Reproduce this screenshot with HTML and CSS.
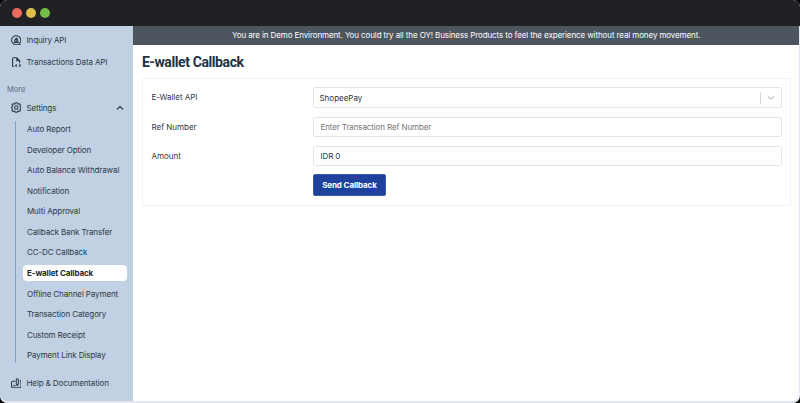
FILE: index.html
```html
<!DOCTYPE html>
<html lang="en">
<head>
<meta charset="utf-8">
<title>E-wallet Callback</title>
<link rel="stylesheet" href="styles.css">
</head>
<body>
<div class="window">
  <header class="titlebar"><i class="dot red"></i><i class="dot yellow"></i><i class="dot green"></i></header>
  <div class="layout">
    <nav class="sidebar">
      <a class="item inquiry"><svg class="icon" viewBox="0 0 20 20"><path d="M15.500 16.8A8.700 8.700 0 1 1 18.700 10c0 2.700-1.200 5-3.200 6.800l3 1.700M5.500 14h9M7 13.500v-3.500M10 13.500V6M13 13.500V9M7 10l3-4 3 3"/></svg><span>Inquiry API</span></a>
      <a class="item transactions"><svg class="icon" viewBox="0 0 20 20"><path d="M6 18.500H4.500A1.500 1.500 0 0 1 3 17V3a1.500 1.500 0 0 1 1.500-1.500H11l5.500 5.500v5M11 2v5h5.500M11 14l-2.500 2.200 2.500 2.300M15.500 14l2.500 2.200-2.500 2.300"/></svg><span>Transactions Data API</span></a>
      <div class="heading">More</div>
      <a class="item settings"><svg class="icon" viewBox="0 0 20 20"><path d="M8.300 1.500h3.400l.6 2 1.600.7 1.900-1 2.300 2.400-1 1.900.7 1.500 1 .3v2.400l-1.100.8-.6 1.300 1 2-2.300 2.300-1.900-1-1.600.7-.6 1.700H8.300l-.6-1.700-1.600-.7-1.900 1-2.300-2.300 1-2-.7-1.300-1-.8V9.300l1-.3.7-1.500-1-1.900 2.300-2.400 1.900 1 1.600-.7z"/><circle cx="10" cy="10.500" r="3.200"/></svg><span>Settings</span><svg class="caret" viewBox="0 0 8 6"><path d="M1 4.500L4 1.500l3 3"/></svg></a>
      <div class="submenu">
        <a>Auto Report</a>
        <a>Developer Option</a>
        <a>Auto Balance Withdrawal</a>
        <a>Notification</a>
        <a>Multi Approval</a>
        <a>Callback Bank Transfer</a>
        <a>CC-DC Callback</a>
        <a class="active">E-wallet Callback</a>
        <a>Offline Channel Payment</a>
        <a>Transaction Category</a>
        <a>Custom Receipt</a>
        <a>Payment Link Display</a>
      </div>
      <a class="item help"><svg class="icon" viewBox="0 0 20 20"><path d="M8 6H3.500A2.500 2.500 0 0 0 1 8.500V16a2.500 2.500 0 0 0 2.500 2.500h13A2.500 2.500 0 0 0 19 16V5h-2M4.500 14.500h4M10 3.500a2 2 0 0 1 4 0V11l-2 3.500-2-3.500z"/></svg><span>Help &amp; Documentation</span></a>
    </nav>
    <main class="main">
      <div class="banner">You are in Demo Environment. You could try all the OY! Business Products to feel the experience without real money movement.</div>
      <h1>E-wallet Callback</h1>
      <form class="card">
        <label>E-Wallet API</label>
        <div class="select"><span>ShopeePay</span><i class="divider"></i><svg class="chevron" viewBox="0 0 8 6"><path d="M1 1.500l3 2.700 3-2.700"/></svg></div>
        <label>Ref Number</label>
        <div class="input placeholder">Enter Transaction Ref Number</div>
        <label>Amount</label>
        <div class="input">IDR 0</div>
        <button type="button">Send Callback</button>
      </form>
    </main>
  </div>
</div>
</body>
</html>
```
FILE: styles.css
```css
* { box-sizing: border-box; }
body { margin: 0; background: #000; font-family: Inter, sans-serif; font-size: 8px; letter-spacing: -.11px; color: #2b3947; }
.window { width: 800px; height: 403px; overflow: hidden; border-radius: 7px; background: #e4e7f4; }
.titlebar { height: 26px; background: #202124; display: flex; align-items: center; gap: 4px; padding-left: 12px; }
.dot { width: 10px; height: 10px; border-radius: 50%; }
.red { background: #ed6a5e; }
.yellow { background: #e0c04c; }
.green { background: #72be47; }
.layout { display: flex; width: 799px; height: 375px; border-radius: 0 0 7px 7px; overflow: hidden; }
.sidebar { width: 133.400px; flex: none; background: #c2d0e3; }
.item { display: flex; align-items: center; height: 22px; padding-left: 10.500px; padding-right: 9.500px; }
.inquiry { margin-top: 3px; }
.icon { width: 10.500px; height: 10.500px; margin-right: 5.500px; fill: none; stroke: #2b3947; stroke-width: 2; }
.heading { height: 10px; line-height: 10px; margin: 12px 0 1.500px 7px; font-size: 7.500px; letter-spacing: 0; color: #5a6b80; }
.caret { width: 8px; height: 6px; margin-left: auto; fill: none; stroke: #2b3947; stroke-width: 1.200; }
.submenu { margin: 2.500px 6.500px 0 15px; border-left: 1px solid #829ccd; padding-left: 7px; height: 242px; display: grid; grid-template-rows: repeat(12, 16px); row-gap: 4.570px; }
.submenu a { line-height: 16px; padding-left: 4px; white-space: nowrap; }
.submenu .active { background: #fff; border-radius: 4px; font-weight: 700; color: #1c2733; }
.help { margin-top: 8.900px; }
.main { flex: 1; background: #fff; }
.banner { height: 18.500px; line-height: 18px; background: #4d555f; color: #fff; text-align: center; white-space: nowrap; }
h1 { margin: 8px 0 7px 8.500px; font: 700 14px/18px Roboto, sans-serif; letter-spacing: -.4px; color: #23313f; }
.card { margin: 0 8px 0 8.600px; height: 128px; border: 1px solid #f0f0f0; border-radius: 2px; padding: 8.500px 8.500px 0; display: grid; grid-template-columns: 161.500px 1fr; grid-template-rows: 21px 20px 20px 22px; row-gap: 8.800px; }
.card label { line-height: 20.500px; letter-spacing: -.02px; }
.select, .input { border: 1px solid #e3e4e6; border-radius: 2px; display: flex; align-items: center; padding-left: 6.500px; }
.select { padding-left: 5.500px; color: #333; letter-spacing: 0; }
.divider { width: 1px; height: 12px; background: #d5d5d5; margin-left: auto; }
.chevron { width: 8px; height: 6px; margin: 0 6px; fill: none; stroke: #c4c4c4; stroke-width: 1.200; }
.placeholder { color: #757575; }
button { grid-column: 2; width: 73px; height: 22px; margin: 0; padding: 0; border: 1px solid #3a5ba9; border-radius: 2px; background: #1e429c; color: #fff; font: 700 8px Inter, sans-serif; letter-spacing: -.11px; }
```
